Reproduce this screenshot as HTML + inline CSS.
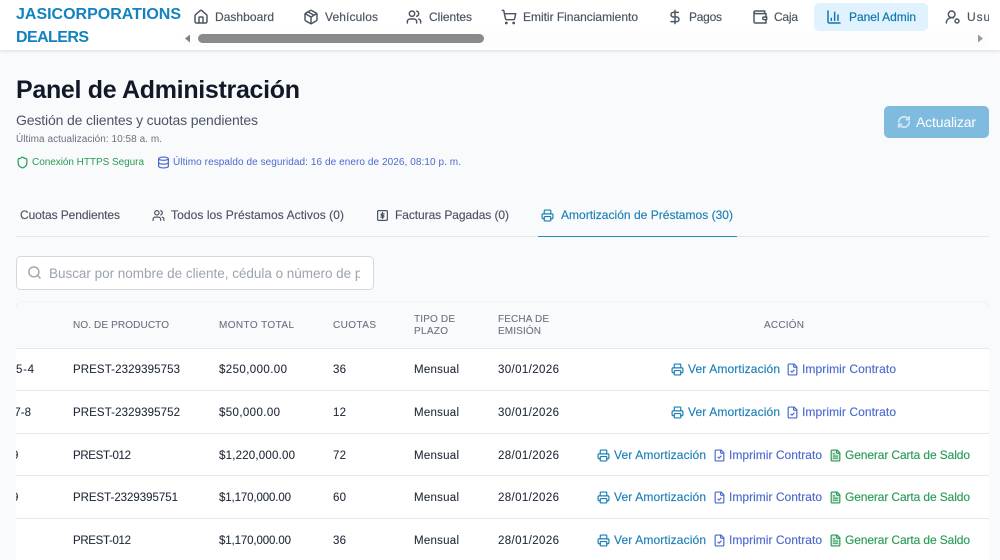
<!DOCTYPE html>
<html lang="es"><head><meta charset="utf-8"><title>Panel de Administración</title>
<style>
html,body{margin:0;padding:0;width:1000px;height:560px;overflow:hidden;background:#f9fafc}
svg{display:block}
text{font-family:"Liberation Sans",sans-serif;white-space:pre}
.n{font-size:12px;fill:#4b5563;stroke:#4b5563;stroke-width:.18px}
.h{font-size:10px;fill:#6b7280;stroke:#6b7280;stroke-width:.1px}
.c{font-size:11.5px;fill:#1f2937;stroke:#1f2937;stroke-width:.08px}
.t{font-size:12px;fill:#4b5563;stroke:#4b5563;stroke-width:.15px}
.a{font-size:12px;fill:#1a7fb5;stroke:#1a7fb5;stroke-width:.15px}
.b{font-size:12px;fill:#4a6ad0;stroke:#4a6ad0;stroke-width:.15px}
.g{font-size:12px;fill:#2b9a58;stroke:#2b9a58;stroke-width:.15px}
.i{fill:none;stroke:currentColor;stroke-width:2.2;stroke-linecap:round;stroke-linejoin:round}
</style></head><body>
<svg width="1000" height="560" viewBox="0 0 1000 560" xmlns="http://www.w3.org/2000/svg">
<defs>
<filter id="s" x="-5%" y="-20%" width="110%" height="150%"><feDropShadow dx="0" dy="1" stdDeviation="1.5" flood-color="#000" flood-opacity=".12"/></filter>
<clipPath id="c1"><rect x="16" y="300" width="973" height="260"/></clipPath>
<clipPath id="c2"><rect x="930" y="0" width="59" height="32"/></clipPath>
<clipPath id="c3"><rect x="40" y="256" width="320" height="34"/></clipPath>
<symbol id="home" viewBox="0 0 24 24"><path d="M15 21v-8a1 1 0 0 0-1-1h-4a1 1 0 0 0-1 1v8"/><path d="M3 10a2 2 0 0 1 .709-1.528l7-5.999a2 2 0 0 1 2.582 0l7 5.999A2 2 0 0 1 21 10v9a2 2 0 0 1-2 2H5a2 2 0 0 1-2-2z"/></symbol>
<symbol id="pkg" viewBox="0 0 24 24"><path d="M11 21.730a2 2 0 0 0 2 0l7-4A2 2 0 0 0 21 16V8a2 2 0 0 0-1-1.730l-7-4a2 2 0 0 0-2 0l-7 4A2 2 0 0 0 3 8v8a2 2 0 0 0 1 1.730z"/><path d="M12 22V12"/><path d="m3.300 7 8.700 5 8.700-5"/><path d="m7.500 4.270 9 5.150"/></symbol>
<symbol id="users" viewBox="0 0 24 24"><path d="M16 21v-2a4 4 0 0 0-4-4H6a4 4 0 0 0-4 4v2"/><circle cx="9" cy="7" r="4"/><path d="M22 21v-2a4 4 0 0 0-3-3.870"/><path d="M16 3.130a4 4 0 0 1 0 7.750"/></symbol>
<symbol id="cart" viewBox="0 0 24 24"><circle cx="8" cy="21" r="1"/><circle cx="19" cy="21" r="1"/><path d="M2.050 2.050h2l2.660 12.420a2 2 0 0 0 2 1.580h9.780a2 2 0 0 0 1.950-1.570l1.650-7.430H5.120"/></symbol>
<symbol id="usd" viewBox="0 0 24 24"><path d="M12 2v20"/><path d="M17 5H9.500a3.500 3.500 0 0 0 0 7h5a3.500 3.500 0 0 1 0 7H6"/></symbol>
<symbol id="wal" viewBox="0 0 24 24"><path d="M21 12V7H5a2 2 0 0 1 0-4h14v4"/><path d="M3 5v14a2 2 0 0 0 2 2h16v-5"/><path d="M18 12a2 2 0 0 0 0 4h4v-4Z"/></symbol>
<symbol id="bar" viewBox="0 0 24 24"><path d="M3 3v16a2 2 0 0 0 2 2h16"/><path d="M18 17V9"/><path d="M13 17V5"/><path d="M8 17v-3"/></symbol>
<symbol id="ucog" viewBox="0 0 24 24"><path d="M2 21a8 8 0 0 1 10.400-7.600"/><circle cx="10" cy="8" r="5"/><circle cx="18" cy="18" r="3"/></symbol>
<symbol id="shield" viewBox="0 0 24 24"><path d="M20 13c0 5-3.500 7.500-7.660 8.950a1 1 0 0 1-.670-.010C7.500 20.500 4 18 4 13V6a1 1 0 0 1 1-1c2 0 4.500-1.200 6.240-2.720a1.170 1.170 0 0 1 1.520 0C14.510 3.810 17 5 19 5a1 1 0 0 1 1 1z"/></symbol>
<symbol id="db" viewBox="0 0 24 24"><ellipse cx="12" cy="5" rx="9" ry="3"/><path d="M3 5V19A9 3 0 0 0 21 19V5"/><path d="M3 12A9 3 0 0 0 21 12"/></symbol>
<symbol id="ref" viewBox="0 0 24 24"><path d="M3 12a9 9 0 0 1 9-9 9.750 9.750 0 0 1 6.740 2.740L21 8"/><path d="M21 3v5h-5"/><path d="M21 12a9 9 0 0 1-9 9 9.750 9.750 0 0 1-6.740-2.740L3 16"/><path d="M8 16H3v5"/></symbol>
<symbol id="prn" viewBox="0 0 24 24"><path d="M6 18H4a2 2 0 0 1-2-2v-5a2 2 0 0 1 2-2h16a2 2 0 0 1 2 2v5a2 2 0 0 1-2 2h-2"/><path d="M6 9V3a1 1 0 0 1 1-1h10a1 1 0 0 1 1 1v6"/><rect x="6" y="14" width="12" height="8" rx="1"/></symbol>
<symbol id="fck" viewBox="0 0 24 24"><path d="M15 2H6a2 2 0 0 0-2 2v16a2 2 0 0 0 2 2h12a2 2 0 0 0 2-2V7Z"/><path d="M14 2v4a2 2 0 0 0 2 2h4"/><path d="m9 15 2 2 4-4"/></symbol>
<symbol id="ftx" viewBox="0 0 24 24"><path d="M15 2H6a2 2 0 0 0-2 2v16a2 2 0 0 0 2 2h12a2 2 0 0 0 2-2V7Z" fill="currentColor" fill-opacity=".15"/><path d="M14 2v4a2 2 0 0 0 2 2h4"/><path d="M10 9H8"/><path d="M16 13H8"/><path d="M16 17H8"/></symbol>
<symbol id="srch" viewBox="0 0 24 24"><circle cx="11" cy="11" r="8"/><path d="m21 21-4.300-4.300"/></symbol>
<symbol id="rcp" viewBox="0 0 24 24"><rect x="3" y="3" width="18" height="18" rx="2"/><path d="M12 6.500v11"/><path d="M15 9h-4a1.500 1.500 0 0 0 0 3h2a1.500 1.500 0 0 1 0 3H9"/></symbol>
</defs>

<rect width="1000" height="560" fill="#f9fafc"/>

<!-- Header -->
<rect x="0" y="0" width="1000" height="50" fill="#fff" filter="url(#s)"/>
<text x="16" y="19" font-size="16" font-weight="700" fill="#1282c0" textLength="165" lengthAdjust="spacing">JASICORPORATIONS</text>
<text x="16" y="42" font-size="16" font-weight="700" fill="#1282c0" textLength="73" lengthAdjust="spacing">DEALERS</text>

<g class="i" color="#4b5563">
<use href="#home" x="193" y="9" width="16" height="16"/>
<use href="#pkg" x="303" y="9" width="16" height="16"/>
<use href="#users" x="406" y="9" width="16" height="16"/>
<use href="#cart" x="501" y="9" width="16" height="16"/>
<use href="#usd" x="667" y="9" width="16" height="16"/>
<use href="#wal" x="752" y="9" width="16" height="16"/>
<use href="#ucog" x="945" y="9" width="16" height="16"/>
</g>
<text class="n" x="215" y="21" textLength="59" lengthAdjust="spacing">Dashboard</text>
<text class="n" x="325" y="21" textLength="53" lengthAdjust="spacing">Vehículos</text>
<text class="n" x="429" y="21" textLength="43" lengthAdjust="spacing">Clientes</text>
<text class="n" x="523" y="21" textLength="115" lengthAdjust="spacing">Emitir Financiamiento</text>
<text class="n" x="689" y="21" textLength="33" lengthAdjust="spacing">Pagos</text>
<text class="n" x="774" y="21" textLength="24" lengthAdjust="spacing">Caja</text>
<rect x="814" y="3" width="114" height="28" rx="5" fill="#e0f2fe"/>
<use href="#bar" x="826" y="9" width="16" height="16" class="i" color="#0f76ad"/>
<text class="n" style="fill:#0f76ad;stroke:#0f76ad" x="849" y="21" textLength="67" lengthAdjust="spacing">Panel Admin</text>
<g clip-path="url(#c2)"><text class="n" x="967" y="21" textLength="54" lengthAdjust="spacing">Usuarios</text></g>

<!-- Scrollbar -->
<rect x="183" y="31" width="806" height="16" fill="#fdfdfd"/>
<rect x="198" y="34" width="286" height="9" rx="4.500" fill="#8a8a8a"/>
<path d="M190 34.500v8l-5-4z" fill="#808080"/>
<path d="M978 34.500v8l5-4z" fill="#9a9a9a"/>

<!-- Title block -->
<text x="16" y="98" font-size="25" font-weight="700" fill="#111827" textLength="284" lengthAdjust="spacing">Panel de Administración</text>
<text x="16" y="125" font-size="14" fill="#4b5563" textLength="242" lengthAdjust="spacing">Gestión de clientes y cuotas pendientes</text>
<text x="16" y="142" font-size="10" fill="#6b7280" textLength="146" lengthAdjust="spacing">Última actualización: 10:58 a. m.</text>
<use href="#shield" x="16" y="156" width="13" height="13" class="i" color="#2b9a58"/>
<text x="32" y="165" font-size="10" fill="#2b9a58" textLength="112" lengthAdjust="spacing">Conexión HTTPS Segura</text>
<use href="#db" x="157" y="156" width="13" height="13" class="i" color="#4a6ad0"/>
<text x="173" y="165" font-size="10" fill="#4a6ad0" textLength="288" lengthAdjust="spacing">Último respaldo de seguridad: 16 de enero de 2026, 08:10 p. m.</text>

<rect x="884" y="106" width="105" height="32" rx="5" fill="#7fbadf"/>
<use href="#ref" x="897" y="115" width="14" height="14" class="i" color="#d4e8f5" style="stroke-width:2.800"/>
<text x="916" y="127" font-size="14" fill="#fff" textLength="60" lengthAdjust="spacing">Actualizar</text>

<!-- Tabs -->
<rect x="16" y="236" width="973" height="1" fill="#e5e7eb"/>
<text class="t" x="20" y="219" textLength="100" lengthAdjust="spacing">Cuotas Pendientes</text>
<use href="#users" x="152" y="209" width="13" height="13" class="i" color="#4b5563"/>
<text class="t" x="171" y="219" textLength="173" lengthAdjust="spacing">Todos los Préstamos Activos (0)</text>
<use href="#rcp" x="376" y="209" width="13" height="13" class="i" color="#4b5563"/>
<text class="t" x="395" y="219" textLength="114" lengthAdjust="spacing">Facturas Pagadas (0)</text>
<use href="#prn" x="541" y="209" width="13" height="13" class="i" color="#1a7fb5"/>
<text class="t" style="fill:#1a7fb5;stroke:#1a7fb5" x="561" y="219" textLength="172" lengthAdjust="spacing">Amortización de Préstamos (30)</text>
<rect x="538" y="236" width="199" height="1" fill="#1d8fc0"/>

<!-- Search -->
<rect x="16.500" y="256.500" width="357" height="33" rx="4" fill="#fff" stroke="#d5d9df"/>
<use href="#srch" x="27" y="265" width="15" height="15" class="i" color="#9ca3af"/>
<g clip-path="url(#c3)"><text x="49" y="278" font-size="13.500" fill="#9ca3af" textLength="362" lengthAdjust="spacing">Buscar por nombre de cliente, cédula o número de préstamo</text></g>

<!-- Table -->
<rect x="16" y="302" width="973" height="270" rx="6" fill="#fff"/>
<path d="M16 348V308a6 6 0 0 1 6-6H983a6 6 0 0 1 6 6V348z" fill="#f8fafc"/>
<path d="M16 308a6 6 0 0 1 6-6H983a6 6 0 0 1 6 6" fill="none" stroke="#eef0f3"/>
<g fill="#e5e7eb">
<rect x="16" y="348" width="973" height="1"/>
<rect x="16" y="390" width="973" height="1"/>
<rect x="16" y="433" width="973" height="1"/>
<rect x="16" y="475" width="973" height="1"/>
<rect x="16" y="518" width="973" height="1"/>
</g>
<text class="h" x="73" y="328" textLength="96" lengthAdjust="spacing">NO. DE PRODUCTO</text>
<text class="h" x="219" y="328" textLength="75" lengthAdjust="spacing">MONTO TOTAL</text>
<text class="h" x="333" y="328" textLength="43" lengthAdjust="spacing">CUOTAS</text>
<text class="h" x="414" y="322" textLength="41" lengthAdjust="spacing">TIPO DE</text>
<text class="h" x="414" y="334" textLength="34" lengthAdjust="spacing">PLAZO</text>
<text class="h" x="498" y="322" textLength="51" lengthAdjust="spacing">FECHA DE</text>
<text class="h" x="498" y="334" textLength="43" lengthAdjust="spacing">EMISIÓN</text>
<text class="h" x="764" y="328" textLength="40" lengthAdjust="spacing">ACCIÓN</text>

<g clip-path="url(#c1)">
<text class="c" x="9" y="373" textLength="25" lengthAdjust="spacing">95-4</text>
<text class="c" x="8" y="416" textLength="23" lengthAdjust="spacing">77-8</text>
<text class="c" x="12" y="459">9</text>
<text class="c" x="12" y="501">9</text>
</g>

<text class="c" x="73" y="373" textLength="107" lengthAdjust="spacing">PREST-2329395753</text>
<text class="c" x="219" y="373" textLength="68" lengthAdjust="spacing">$250,000.00</text>
<text class="c" x="333" y="373" textLength="13" lengthAdjust="spacing">36</text>
<text class="c" x="414" y="373" textLength="45" lengthAdjust="spacing">Mensual</text>
<text class="c" x="498" y="373" textLength="61" lengthAdjust="spacing">30/01/2026</text>

<text class="c" x="73" y="416" textLength="107" lengthAdjust="spacing">PREST-2329395752</text>
<text class="c" x="219" y="416" textLength="61" lengthAdjust="spacing">$50,000.00</text>
<text class="c" x="333" y="416" textLength="13" lengthAdjust="spacing">12</text>
<text class="c" x="414" y="416" textLength="45" lengthAdjust="spacing">Mensual</text>
<text class="c" x="498" y="416" textLength="61" lengthAdjust="spacing">30/01/2026</text>

<text class="c" x="73" y="459" textLength="58" lengthAdjust="spacing">PREST-012</text>
<text class="c" x="219" y="459" textLength="76" lengthAdjust="spacing">$1,220,000.00</text>
<text class="c" x="333" y="459" textLength="13" lengthAdjust="spacing">72</text>
<text class="c" x="414" y="459" textLength="45" lengthAdjust="spacing">Mensual</text>
<text class="c" x="498" y="459" textLength="61" lengthAdjust="spacing">28/01/2026</text>

<text class="c" x="73" y="501" textLength="105" lengthAdjust="spacing">PREST-2329395751</text>
<text class="c" x="219" y="501" textLength="72" lengthAdjust="spacing">$1,170,000.00</text>
<text class="c" x="333" y="501" textLength="13" lengthAdjust="spacing">60</text>
<text class="c" x="414" y="501" textLength="45" lengthAdjust="spacing">Mensual</text>
<text class="c" x="498" y="501" textLength="61" lengthAdjust="spacing">28/01/2026</text>

<text class="c" x="73" y="544" textLength="58" lengthAdjust="spacing">PREST-012</text>
<text class="c" x="219" y="544" textLength="72" lengthAdjust="spacing">$1,170,000.00</text>
<text class="c" x="333" y="544" textLength="13" lengthAdjust="spacing">36</text>
<text class="c" x="414" y="544" textLength="45" lengthAdjust="spacing">Mensual</text>
<text class="c" x="498" y="544" textLength="61" lengthAdjust="spacing">28/01/2026</text>

<!-- Actions rows 1-2 -->
<use href="#prn" x="671" y="363" width="13" height="13" class="i" color="#1a7fb5"/>
<text class="a" x="688" y="373" textLength="92" lengthAdjust="spacing">Ver Amortización</text>
<use href="#fck" x="786" y="363" width="13" height="13" class="i" color="#4a6ad0"/>
<text class="b" x="802" y="373" textLength="94" lengthAdjust="spacing">Imprimir Contrato</text>

<use href="#prn" x="671" y="406" width="13" height="13" class="i" color="#1a7fb5"/>
<text class="a" x="688" y="416" textLength="92" lengthAdjust="spacing">Ver Amortización</text>
<use href="#fck" x="786" y="406" width="13" height="13" class="i" color="#4a6ad0"/>
<text class="b" x="802" y="416" textLength="94" lengthAdjust="spacing">Imprimir Contrato</text>

<!-- Actions rows 3-5 -->
<use href="#prn" x="597" y="449" width="13" height="13" class="i" color="#1a7fb5"/>
<text class="a" x="614" y="459" textLength="92" lengthAdjust="spacing">Ver Amortización</text>
<use href="#fck" x="713" y="449" width="13" height="13" class="i" color="#4a6ad0"/>
<text class="b" x="729" y="459" textLength="93" lengthAdjust="spacing">Imprimir Contrato</text>
<use href="#ftx" x="829" y="449" width="13" height="13" class="i" color="#2b9a58"/>
<text class="g" x="845" y="459" textLength="125" lengthAdjust="spacing">Generar Carta de Saldo</text>

<use href="#prn" x="597" y="491" width="13" height="13" class="i" color="#1a7fb5"/>
<text class="a" x="614" y="501" textLength="92" lengthAdjust="spacing">Ver Amortización</text>
<use href="#fck" x="713" y="491" width="13" height="13" class="i" color="#4a6ad0"/>
<text class="b" x="729" y="501" textLength="93" lengthAdjust="spacing">Imprimir Contrato</text>
<use href="#ftx" x="829" y="491" width="13" height="13" class="i" color="#2b9a58"/>
<text class="g" x="845" y="501" textLength="125" lengthAdjust="spacing">Generar Carta de Saldo</text>

<use href="#prn" x="597" y="534" width="13" height="13" class="i" color="#1a7fb5"/>
<text class="a" x="614" y="544" textLength="92" lengthAdjust="spacing">Ver Amortización</text>
<use href="#fck" x="713" y="534" width="13" height="13" class="i" color="#4a6ad0"/>
<text class="b" x="729" y="544" textLength="93" lengthAdjust="spacing">Imprimir Contrato</text>
<use href="#ftx" x="829" y="534" width="13" height="13" class="i" color="#2b9a58"/>
<text class="g" x="845" y="544" textLength="125" lengthAdjust="spacing">Generar Carta de Saldo</text>
</svg>
</body></html>
